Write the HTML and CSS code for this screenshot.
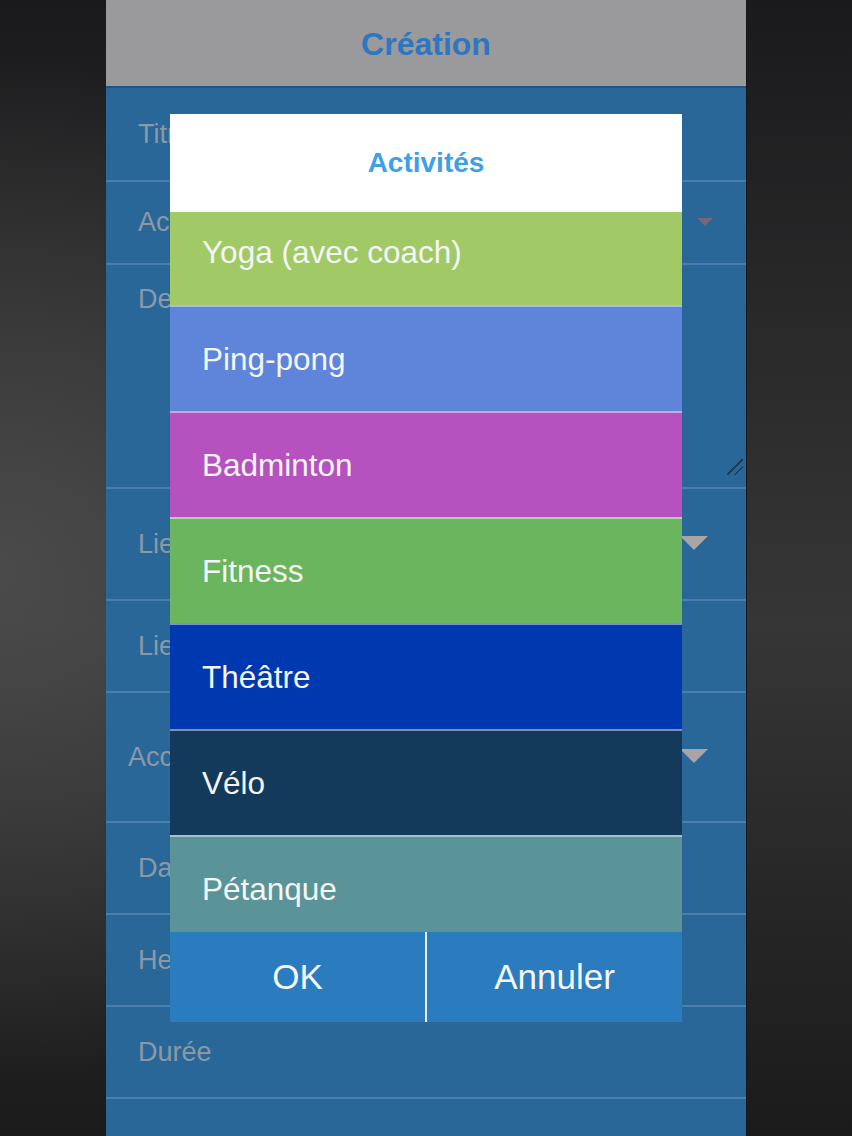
FILE: index.html
```html
<!doctype html>
<html lang="fr">

<head>
  <meta charset="utf-8">
  <title>Création</title>
  <meta name="viewport" content="width=device-width, initial-scale=1">
  <link rel="stylesheet" href="styles.css">
</head>

<body>
  <div class="device">
    <header class="topbar">Création</header>

    <form class="form">
      <div class="form-row row-titre"><label>Titre</label></div>
      <div class="form-row row-activite">
        <label>Activité</label>
        <span class="arrow-small"></span>
      </div>
      <div class="form-row row-desc">
        <label>Description</label>
        <span class="resize"></span>
      </div>
      <div class="form-row row-lieu">
        <label>Lieu</label>
        <span class="arrow"></span>
      </div>
      <div class="form-row row-short"><label>Lieu précis</label></div>
      <div class="form-row row-acces">
        <label class="label-left">Accès</label>
        <span class="arrow"></span>
      </div>
      <div class="form-row row-short"><label>Date</label></div>
      <div class="form-row row-short"><label>Heure</label></div>
      <div class="form-row row-short"><label>Durée</label></div>
      <div class="form-row"></div>
    </form>

    <!-- picker dialog -->
    <div class="dialog">
      <div class="dialog-title">Activités</div>
      <div class="dialog-list">
        <ul class="choices">
          <li class="choice yoga">Yoga (avec coach)</li>
          <li class="choice ping">Ping-pong</li>
          <li class="choice badminton">Badminton</li>
          <li class="choice fitness">Fitness</li>
          <li class="choice theatre">Théâtre</li>
          <li class="choice velo">Vélo</li>
          <li class="choice petanque">Pétanque</li>
        </ul>
      </div>
      <div class="dialog-buttons">
        <button type="button" class="btn">OK</button>
        <button type="button" class="btn">Annuler</button>
      </div>
    </div>
  </div>
</body>
</html>
```

FILE: styles.css
```css
body {
  margin: 0;
  padding: 0;
  font-family: 'Liberation Sans', Arial, Helvetica, sans-serif;
  background:
    radial-gradient(ellipse 60% 45% at 0% 50%, rgba(80, 80, 80, 0.8) 0%, rgba(80, 80, 80, 0) 100%),
    linear-gradient(to bottom, #1a1a1c 0%, #2a2a2b 30%, #363636 55%, #262627 80%, #1b1b1c 100%);
  min-height: 1136px;
  overflow: hidden;
}

.device {
  position: relative;
  width: 640px;
  height: 1136px;
  margin: 0 auto;
  background-color: #296799;
  overflow: hidden;
  box-shadow: 1px 0 0 #151515;
}

.topbar {
  height: 86px;
  line-height: 88px;
  background-color: #9a999b;
  border-bottom: 2px solid #1f5687;
  color: #2e77c0;
  font-size: 32px;
  font-weight: bold;
  text-align: center;
}

.form {
  margin: 0;
}

.form-row {
  position: relative;
  box-sizing: border-box;
  height: 92px;
  border-bottom: 2px solid #4a7eab;
  display: flex;
  align-items: center;
  padding-left: 32px;
}
.form-row label {
  font-size: 27px;
  color: #8b99a6;
}
.row-titre { height: 94px; }
.row-activite { height: 83px; }
.row-desc {
  height: 224px;
  align-items: flex-start;
  padding-top: 19px;
}
.row-lieu { height: 112px; }
.row-acces { height: 130px; }
.label-left { margin-left: -10px; }

.arrow {
  position: absolute;
  left: 574px;
  top: 50%;
  margin-top: -8px;
  width: 0;
  height: 0;
  border-left: 14px solid transparent;
  border-right: 14px solid transparent;
  border-top: 14px solid #a7a5a6;
}
.arrow-small {
  position: absolute;
  left: 591px;
  top: 36px;
  width: 0;
  height: 0;
  border-left: 8px solid transparent;
  border-right: 8px solid transparent;
  border-top: 8px solid #75687a;
}
.resize {
  position: absolute;
  right: 3px;
  bottom: 12px;
  width: 16px;
  height: 16px;
  background: linear-gradient(135deg, transparent 46%, #193f5f 46%, #193f5f 54%, transparent 54%, transparent 70%, #193f5f 70%, #193f5f 78%, transparent 78%);
}

/* dialog */
.dialog {
  position: absolute;
  top: 114px;
  left: 64px;
  width: 512px;
}
.dialog-title {
  height: 98px;
  line-height: 98px;
  background-color: #ffffff;
  color: #3ea0e6;
  font-size: 28px;
  font-weight: bold;
  text-align: center;
}
.dialog-list {
  height: 720px;
  overflow: hidden;
}
.choices {
  list-style: none;
  margin: -13px 0 0 0;
  padding: 0;
}
.choice {
  box-sizing: border-box;
  height: 106px;
  padding-left: 32px;
  display: flex;
  align-items: center;
  font-size: 31.5px;
  color: #f4f5f6;
  border-top: 2px solid rgba(255, 255, 255, 0.45);
}
.choice:first-child { border-top: 0; }
.yoga { background-color: #a1ca67; }
.ping { background-color: #5e85d9; }
.badminton { background-color: #b652bf; }
.fitness { background-color: #6bb55e; }
.theatre { background-color: #0038b0; }
.velo { background-color: #143a5b; }
.petanque { background-color: #5a9499; }

.dialog-buttons {
  display: flex;
  height: 90px;
  background-color: #2b7bbf;
}
.btn {
  flex: 1;
  border: 0;
  padding: 0;
  background: transparent;
  color: #f4f6f8;
  font-family: 'Liberation Sans', Arial, sans-serif;
  font-size: 35px;
}
.btn + .btn {
  border-left: 2px solid #e8eef4;
}
```
